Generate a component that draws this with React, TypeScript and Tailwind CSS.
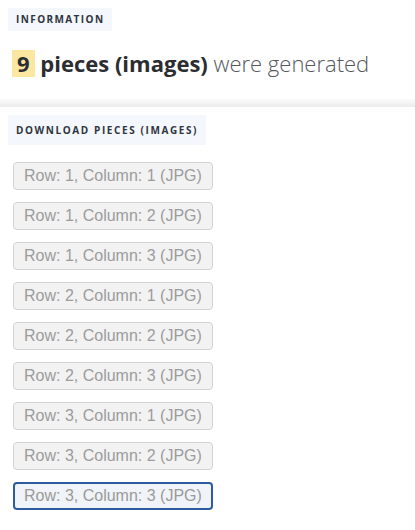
import React from "react";

const pieces = [
  [1, 1], [1, 2], [1, 3],
  [2, 1], [2, 2], [2, 3],
  [3, 1], [3, 2], [3, 3],
];

function Label({ children, tall }: { children: React.ReactNode; tall?: boolean }) {
  return (
    <div className="flex">
      <span
        className={
          tall
            ? "bg-[#f4f7fb] px-2 pt-[10px] pb-[9px] text-[10px] font-bold uppercase leading-[11px] tracking-[1.6px] text-[#2f3540] [font-family:'Open_Sans',sans-serif]"
            : "bg-[#f4f7fb] px-2 py-[6px] text-[10px] font-bold uppercase leading-[11px] tracking-[1.4px] text-[#2f3540] [font-family:'Open_Sans',sans-serif]"
        }
      >
        {children}
      </span>
    </div>
  );
}

export default function App() {
  return (
    <div className="min-h-[530px] w-[415px] bg-white">
      {/* Info */}
      <div className="px-2 pt-2">
        <Label>Information</Label>
        <p className="mt-[19px] pl-1 text-[22px] leading-[27px] text-[#55585d] [font-family:'Open_Sans',sans-serif]">
          <span className="inline-block bg-[#fbe6a2] px-[5px] font-bold text-[#2b2d31]">9</span>{" "}
          <b className="font-bold text-[#2b2d31]">pieces (images)</b>{" "}
          <span className="font-light">were generated</span>
        </p>
      </div>

      {/* strip */}
      <div className="mt-[22px] h-[8px] bg-gradient-to-b from-[#fafafa] to-[#ececec]" />

      {/* Downloads */}
      <div className="px-2 pt-[8px]">
        <Label tall>Download pieces (images)</Label>
        <div className="mt-[17px] flex flex-col items-start gap-3 pl-[5px]">
          {pieces.map(([r, c], i) => {
            const last = i === pieces.length - 1;
            return (
              <button
                key={i}
                className={
                  last
                    ? "h-[28px] w-[200px] whitespace-nowrap rounded-[4px] border-2 border-[#2c5b9e] bg-[#f0f3f7] px-[9px] text-left text-[16px] leading-[18px] text-[#9a9a9a] [font-family:'Liberation_Sans',Arial,sans-serif]"
                    : "h-[28px] w-[200px] whitespace-nowrap rounded-[4px] border border-[#d3d3d3] bg-[#f2f2f2] px-[10px] text-left text-[16px] leading-[18px] text-[#9c9c9c] [font-family:'Liberation_Sans',Arial,sans-serif]"
                }
              >
                Row: {r}, Column: {c} (JPG)
              </button>
            );
          })}
        </div>
      </div>
    </div>
  );
}
